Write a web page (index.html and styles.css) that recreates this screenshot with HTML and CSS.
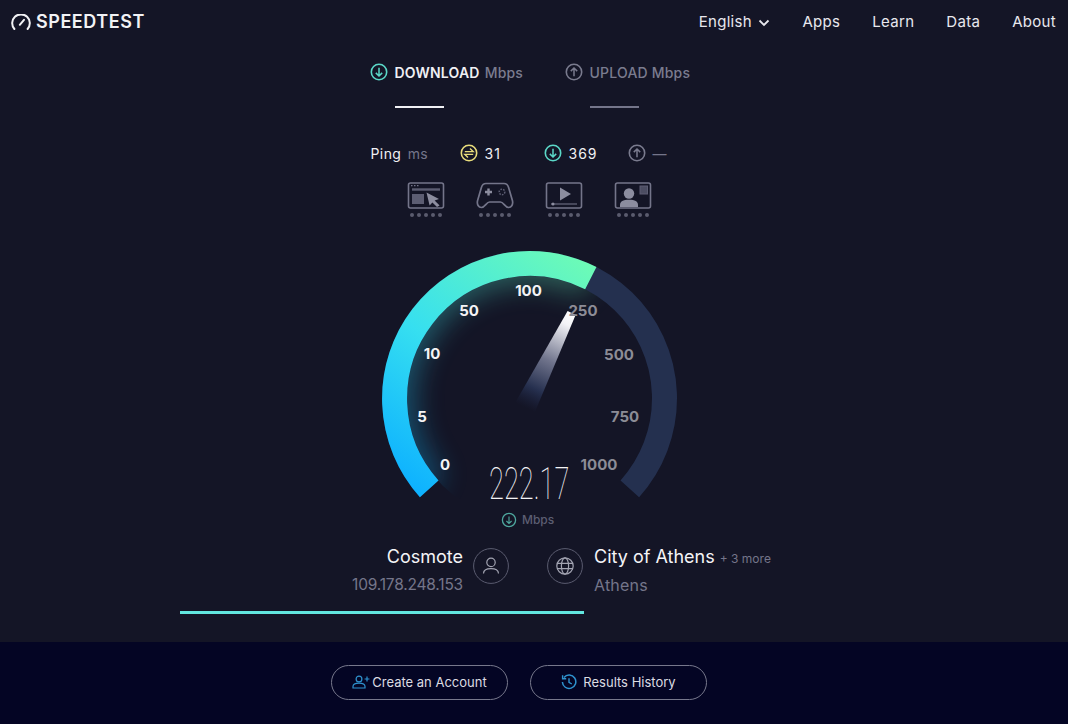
FILE: index.html
```html
<!DOCTYPE html>
<html>
<head>
  <title>Speedtest</title>
  <meta name="viewport" content="width=device-width, initial-scale=1.0">
  <link rel="stylesheet" href="styles.css">
</head>
<body>
  <div class="header-bar">
    <div class="logo">
      <svg class="logo-icon" viewBox="0 0 20 16" fill="none">
        <path d="M3.4 15A8.8 8.8 0 1 1 16.6 15" stroke="#f2f2f5" stroke-width="2" stroke-linecap="round"/>
        <path d="M8.8 10.8L13 5.8" stroke="#f2f2f5" stroke-width="2" stroke-linecap="round"/>
      </svg>
      <span>SPEEDTEST</span>
    </div>
    <div class="nav">
      <span class="nav-lang">English
        <svg class="chevron" viewBox="0 0 12 8" fill="none"><path d="M1.5 1.5L6 6L10.5 1.5" stroke="#e8e8ee" stroke-width="1.8"/></svg>
      </span>
      <span>Apps</span>
      <span>Learn</span>
      <span>Data</span>
      <span>About</span>
    </div>
  </div>

  <div class="main">
    <div class="tabs">
      <div class="tab tab-download">
        <div class="tab-label">
          <svg class="round-icon" viewBox="0 0 18 18" fill="none">
            <circle cx="9" cy="9" r="7.7" stroke="#5bd8c8" stroke-width="1.6"/>
            <path d="M9 4.8V13M5.8 9.9L9 13L12.2 9.9" stroke="#5bd8c8" stroke-width="1.5"/>
          </svg>
          <span class="tab-name">DOWNLOAD</span><span class="tab-unit">Mbps</span>
        </div>
        <div class="tab-line"></div>
      </div>
      <div class="tab tab-upload">
        <div class="tab-label">
          <svg class="round-icon" viewBox="0 0 18 18" fill="none">
            <circle cx="9" cy="9" r="7.7" stroke="#7a7b8e" stroke-width="1.6"/>
            <path d="M9 13.2V5M5.8 8.1L9 5L12.2 8.1" stroke="#7a7b8e" stroke-width="1.5"/>
          </svg>
          <span>UPLOAD Mbps</span>
        </div>
        <div class="tab-line"></div>
      </div>
    </div>

    <div class="ping-row">
      <div class="ping-label">Ping <span class="ping-unit">ms</span></div>
      <div class="ping-item ping-latency">
        <svg class="round-icon" viewBox="0 0 18 18" fill="none">
          <circle cx="9" cy="9" r="7.7" stroke="#e9dd7c" stroke-width="1.6"/>
          <path d="M4.8 7.6H13.2L10 4.4M13.2 10.4H4.8L8 13.6" stroke="#e9dd7c" stroke-width="1.4"/>
        </svg>
        <span>31</span>
      </div>
      <div class="ping-item ping-down">
        <svg class="round-icon" viewBox="0 0 18 18" fill="none">
          <circle cx="9" cy="9" r="7.7" stroke="#5bd8c8" stroke-width="1.6"/>
          <path d="M9 4.8V13M5.8 9.9L9 13L12.2 9.9" stroke="#5bd8c8" stroke-width="1.5"/>
        </svg>
        <span>369</span>
      </div>
      <div class="ping-item">
        <svg class="round-icon" viewBox="0 0 18 18" fill="none">
          <circle cx="9" cy="9" r="7.7" stroke="#7a7b8e" stroke-width="1.6"/>
          <path d="M9 13.2V5M5.8 8.1L9 5L12.2 8.1" stroke="#7a7b8e" stroke-width="1.5"/>
        </svg>
        <span class="ping-empty">—</span>
      </div>
    </div>

    <div class="quality-row">
      <div class="quality">
        <svg class="quality-icon" viewBox="0 0 38 27" fill="none">
          <rect x="1.5" y="1" width="35" height="25" rx="2" stroke="#74758a" stroke-width="1.6"/>
          <path d="M4 3.6H5.5M7 3.6H8.5M10 3.6H11.5" stroke="#74758a" stroke-width="1.4"/>
          <path d="M5 7.5H33" stroke="#5c5d72" stroke-width="2.4"/>
          <rect x="5" y="12" width="12" height="10" fill="#5c5d72"/>
          <path d="M19.5 10.5L32 17L27.6 18.6L32.6 23.4L30 25L25.4 20.4L22.6 23.6Z" fill="#8c8d9f"/>
        </svg>
        <div class="dots"><i></i><i></i><i></i><i></i><i></i></div>
      </div>
      <div class="quality">
        <svg class="quality-icon" viewBox="0 0 38 27" fill="none">
          <path d="M10 1.5H28C30.6 1.5 31.8 3 32.6 5.4L36.4 18.5C37.4 22.4 35.4 25.5 32.6 25.5C29 25.5 27.6 20 24.4 20H13.6C10.4 20 9 25.5 5.4 25.5C2.6 25.5 0.6 22.4 1.6 18.5L5.4 5.4C6.2 3 7.4 1.5 10 1.5Z" stroke="#74758a" stroke-width="1.7"/>
          <path d="M12.5 6.5V13.5M9 10H16" stroke="#8c8d9f" stroke-width="2.4"/>
          <circle cx="26" cy="10" r="2.8" stroke="#5c5d72" stroke-width="1.5" stroke-dasharray="1.6 1.2"/>
        </svg>
        <div class="dots"><i></i><i></i><i></i><i></i><i></i></div>
      </div>
      <div class="quality">
        <svg class="quality-icon" viewBox="0 0 38 27" fill="none">
          <rect x="1.5" y="1" width="35" height="25" rx="2" stroke="#74758a" stroke-width="1.6"/>
          <path d="M15 5.5L26 12L15 18.5Z" fill="#8c8d9f"/>
          <path d="M6 22H32" stroke="#5c5d72" stroke-width="1.4"/>
          <circle cx="8" cy="22" r="1.5" fill="#8c8d9f"/>
        </svg>
        <div class="dots"><i></i><i></i><i></i><i></i><i></i></div>
      </div>
      <div class="quality">
        <svg class="quality-icon" viewBox="0 0 38 27" fill="none">
          <rect x="1.5" y="1" width="35" height="25" rx="2" stroke="#74758a" stroke-width="1.6"/>
          <circle cx="15" cy="11.5" r="5.2" fill="#8c8d9f"/>
          <path d="M6 25V23C6 19.5 9 17.8 15 17.8C21 17.8 24 19.5 24 23V25Z" fill="#8c8d9f"/>
          <rect x="26" y="4" width="7.5" height="8" fill="#4c4d62" stroke="#5c5d72"/>
        </svg>
        <div class="dots"><i></i><i></i><i></i><i></i><i></i></div>
      </div>
    </div>

    <svg class="gauge" viewBox="0 0 320 290" fill="none">
      <defs>
        <linearGradient id="arcFill" gradientUnits="userSpaceOnUse" x1="50" y1="257" x2="226" y2="28">
          <stop offset="0" stop-color="#0db1ff"/>
          <stop offset="0.45" stop-color="#36dff0"/>
          <stop offset="1" stop-color="#6dfbb6"/>
        </linearGradient>
        <linearGradient id="needleFill" gradientUnits="userSpaceOnUse" x1="201.6" y1="73" x2="155" y2="167.5">
          <stop offset="0" stop-color="#ffffff"/>
          <stop offset="0.12" stop-color="#f2f2f6"/>
          <stop offset="0.5" stop-color="#70748c"/>
          <stop offset="0.8" stop-color="#26304f"/>
          <stop offset="1" stop-color="#1c2340" stop-opacity="0"/>
        </linearGradient>
        <filter id="glowBlur" x="-30%" y="-30%" width="160%" height="160%">
          <feGaussianBlur stdDeviation="14"/>
        </filter>
        <clipPath id="innerClip"><circle cx="159.5" cy="158.5" r="123"/></clipPath>
      </defs>
      <g clip-path="url(#innerClip)">
        <path d="M59.2 248.8A135 135 0 0 1 220.8 38.2" stroke="url(#arcFill)" stroke-width="40" opacity="0.34" filter="url(#glowBlur)"/>
      </g>
      <path d="M59.2 248.8A135 135 0 1 1 259.8 248.8" stroke="#24304f" stroke-width="25"/>
      <path d="M59.2 248.8A135 135 0 0 1 220.8 38.2" stroke="url(#arcFill)" stroke-width="25"/>
      <polygon points="205.6,75 197.6,71 145.2,162.7 164.8,172.3" fill="url(#needleFill)"/>
      <g class="scale-on">
        <text x="75" y="230">0</text>
        <text x="52" y="182">5</text>
        <text x="62" y="119">10</text>
        <text x="99" y="76">50</text>
        <text x="158.5" y="56">100</text>
      </g>
      <g class="scale-off">
        <text x="213" y="76">250</text>
        <text x="249" y="120">500</text>
        <text x="255" y="182">750</text>
        <text x="229" y="230">1000</text>
      </g>
      <text class="speed" transform="translate(119 259) scale(0.62 1)">222.17</text>
      <circle cx="139" cy="280" r="6.6" stroke="#4fa89f" stroke-width="1.3"/>
      <path d="M139 276.4V283.4M136.4 281L139 283.4L141.6 281" stroke="#4fa89f" stroke-width="1.1"/>
      <text class="speed-unit" x="152" y="284">Mbps</text>
    </svg>

    <div class="servers">
      <div class="server server-isp">
        <div class="server-text">
          <div class="server-name">Cosmote</div>
          <div class="server-sub server-ip">109.178.248.153</div>
        </div>
        <svg class="server-icon" viewBox="0 0 36 36" fill="none">
          <circle cx="18" cy="18" r="17.4" stroke="#5b5c70"/>
          <circle cx="18" cy="14.4" r="4.2" stroke="#a3a4b2" stroke-width="1.2"/>
          <path d="M10.5 25.5C10.5 22 13.5 20.6 18 20.6C22.5 20.6 25.5 22 25.5 25.5" stroke="#a3a4b2" stroke-width="1.2"/>
        </svg>
      </div>
      <div class="server server-host">
        <svg class="server-icon" viewBox="0 0 36 36" fill="none">
          <circle cx="18" cy="18" r="17.4" stroke="#5b5c70"/>
          <circle cx="18" cy="18" r="8.2" stroke="#a3a4b2" stroke-width="1.2"/>
          <ellipse cx="18" cy="18" rx="3.6" ry="8.2" stroke="#a3a4b2" stroke-width="1.2"/>
          <path d="M10 15.4H26M10 20.6H26" stroke="#a3a4b2" stroke-width="1.2"/>
        </svg>
        <div class="server-text">
          <div class="server-name">City of Athens <span class="server-more">+ 3 more</span></div>
          <div class="server-sub">Athens</div>
        </div>
      </div>
    </div>

    <div class="progress"><div class="progress-fill"></div></div>
  </div>

  <div class="footer">
    <div class="footer-btn">
      <svg class="btn-icon" viewBox="0 0 18 14" fill="none">
        <circle cx="7" cy="4" r="2.9" stroke="#2f93cf" stroke-width="1.2"/>
        <path d="M1 13V11.6C1 9.4 3.4 8.2 7 8.2C10.6 8.2 13 9.4 13 11.6V13Z" stroke="#2f93cf" stroke-width="1.2"/>
        <path d="M12.6 4H17.4M15 1.6V6.4" stroke="#2f93cf" stroke-width="1.2"/>
      </svg>
      <span>Create an Account</span>
    </div>
    <div class="footer-btn">
      <svg class="btn-icon history" viewBox="0 0 16 16" fill="none">
        <path d="M3 3.4A6.7 6.7 0 1 1 1.4 8" stroke="#2f93cf" stroke-width="1.5"/>
        <path d="M1.6 1.2V4.8H5.2" stroke="#2f93cf" stroke-width="1.4"/>
        <path d="M8 4.2V8.4L10.8 10" stroke="#2f93cf" stroke-width="1.4"/>
      </svg>
      <span>Results History</span>
    </div>
  </div>
</body>
</html>
```

FILE: styles.css
```css
body {
  margin: 0;
  padding: 0;
  font-family: Inter, "Open Sans", sans-serif;
  background-color: #141526;
  color: #f0f0f4;
}

.header-bar {
  height: 43px;
  display: flex;
  align-items: center;
  justify-content: space-between;
  padding: 0 12px 1px 11px;
}

.logo {
  display: flex;
  align-items: center;
  gap: 5px;
  font-size: 18px;
  font-weight: 600;
  letter-spacing: 0.55px;
  color: #f2f2f5;
}

.logo-icon {
  width: 20px;
  height: 16px;
}

.nav {
  display: flex;
  gap: 32px;
  font-size: 15px;
  letter-spacing: 0.3px;
  color: #e8e8ee;
}

.chevron {
  width: 12px;
  height: 8px;
  margin-left: 2px;
}

.main {
  height: 598px;
  padding-right: 8px;
}

.tabs {
  display: flex;
  justify-content: center;
  gap: 42px;
  padding-top: 19px;
}

.tab-download {
  width: 153px;
}

.tab-upload {
  width: 126px;
}

.tab-label {
  display: flex;
  align-items: center;
  height: 18px;
  font-size: 14px;
  font-weight: 500;
  letter-spacing: 0.2px;
  white-space: pre;
  color: #7b7c8f;
}

.round-icon {
  width: 18px;
  height: 18px;
  flex: none;
  margin-right: 7px;
}

.tab-name {
  margin-right: 5px;
  color: #f0f0f4;
  font-weight: 600;
}

.tab-line {
  width: 49px;
  height: 2px;
  margin: 25px 0 0 25px;
  background-color: #74758a;
}

.tab-download .tab-line {
  background-color: #f0f0f4;
}

.ping-row {
  display: flex;
  align-items: center;
  justify-content: center;
  height: 18px;
  margin-top: 36px;
  padding-right: 24px;
  font-size: 14px;
  letter-spacing: 0.4px;
}

.ping-label {
  width: 89px;
}

.ping-unit {
  margin-left: 2px;
  color: #74758a;
}

.ping-item {
  display: flex;
  align-items: center;
  width: 84px;
  letter-spacing: 1px;
}

.ping-item:last-child {
  width: 38px;
}

.ping-empty {
  color: #74758a;
}

.quality-row {
  display: flex;
  justify-content: center;
  gap: 31px;
  margin-top: 20px;
  padding-right: 2px;
}

.quality {
  display: flex;
  flex-direction: column;
  align-items: center;
  gap: 4px;
}

.quality-icon {
  width: 38px;
  height: 27px;
}

.dots {
  display: flex;
  gap: 3px;
}

.dots i {
  width: 4px;
  height: 4px;
  border-radius: 50%;
  background-color: #5a5b6e;
}

.gauge {
  display: block;
  width: 320px;
  height: 290px;
  margin: 23px auto 0;
}

.gauge text {
  font-family: Inter, sans-serif;
}

.scale-on text,
.scale-off text {
  font-size: 15px;
  font-weight: 700;
  text-anchor: middle;
}

.scale-on text {
  fill: #f4f4f6;
}

.scale-off text {
  fill: #8c8c96;
}

.gauge .speed {
  font-family: Roboto, sans-serif;
  font-size: 44px;
  font-weight: 100;
  fill: #f4f4f6;
}

.speed-unit {
  font-size: 12px;
  font-weight: 500;
  fill: #5c5e72;
}

.servers {
  display: grid;
  grid-template-columns: 1fr 1fr;
  gap: 38px;
  margin-top: 9px;
  padding-right: 4px;
}

.server {
  display: flex;
  gap: 10px;
  height: 56px;
}

.server-isp {
  justify-content: flex-end;
  text-align: right;
}

.server-icon {
  width: 36px;
  height: 36px;
  margin-top: 9px;
}

.server-host {
  gap: 11px;
}

.server-name {
  font-size: 18px;
  font-weight: 400;
  line-height: 24px;
  margin-top: 6px;
  white-space: nowrap;
  color: #f4f4f7;
}

.server-sub {
  margin-top: 4px;
  font-size: 16px;
  letter-spacing: 0.2px;
  line-height: 24px;
  color: #74758a;
}

.server-ip {
  font-size: 15.5px;
  letter-spacing: -0.2px;
}

.server-more {
  font-size: 12px;
  line-height: 1;
  color: #74758a;
}

.progress {
  margin: 16px 0 0 180px;
}

.progress-fill {
  width: 404px;
  height: 3px;
  background-color: #62e6df;
}

.footer {
  height: 82px;
  display: flex;
  justify-content: center;
  gap: 22px;
  padding: 23px 30px 0 0;
  box-sizing: border-box;
  background-color: #040524;
}

.footer-btn {
  display: flex;
  align-items: center;
  justify-content: center;
  gap: 2px;
  width: 177px;
  height: 35px;
  padding-bottom: 1px;
  box-sizing: border-box;
  border: 1px solid #77788c;
  border-radius: 18px;
  font-size: 13px;
  color: #dcdce2;
}

.btn-icon {
  width: 18px;
  height: 14px;
}

.btn-icon.history {
  width: 16px;
  height: 16px;
  margin-right: 4px;
}
```
